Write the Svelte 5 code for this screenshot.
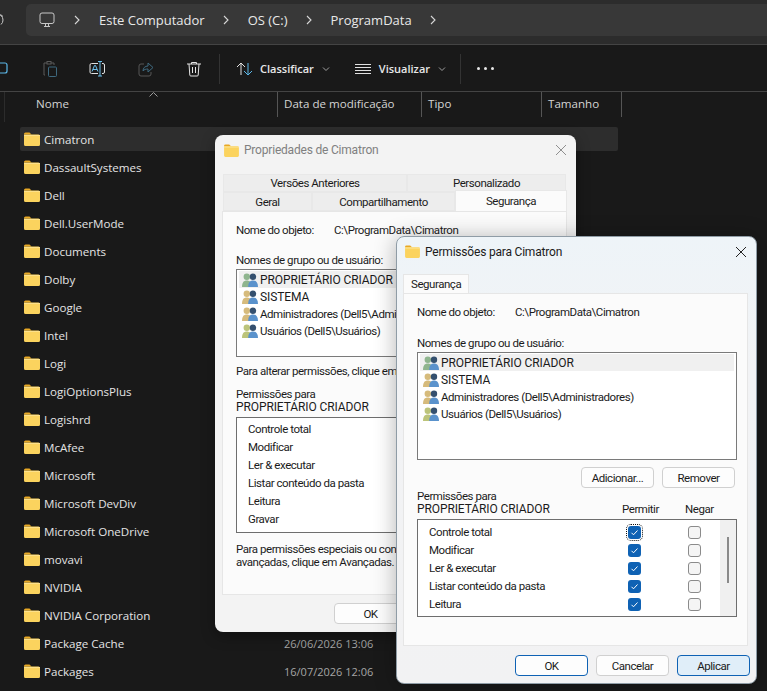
<script>
  const folders = [
    { name: "Cimatron", selected: true },
    { name: "DassaultSystemes" },
    { name: "Dell" },
    { name: "Dell.UserMode" },
    { name: "Documents" },
    { name: "Dolby" },
    { name: "Google" },
    { name: "Intel" },
    { name: "Logi" },
    { name: "LogiOptionsPlus" },
    { name: "Logishrd" },
    { name: "McAfee" },
    { name: "Microsoft" },
    { name: "Microsoft DevDiv" },
    { name: "Microsoft OneDrive" },
    { name: "movavi" },
    { name: "NVIDIA" },
    { name: "NVIDIA Corporation" },
    { name: "Package Cache", date: "26/06/2026 13:06" },
    { name: "Packages", date: "16/07/2026 12:06" },
  ];

  const users = [
    { name: "PROPRIETÁRIO CRIADOR", tone: "#8fb58e", caps: true, selected: true },
    { name: "SISTEMA", tone: "#d6bb7c", caps: true },
    { name: "Administradores (Dell5\\Administradores)", tone: "#d6bb7c" },
    { name: "Usuários (Dell5\\Usuários)", tone: "#bcc47a" },
  ];

  const perms = ["Controle total", "Modificar", "Ler & executar", "Listar conteúdo da pasta", "Leitura", "Gravar"];
</script>

{#snippet folder(cls)}
  <svg class={cls} viewBox="0 0 16 14">
    <path d="M0 2a1.5 1.5 0 0 1 1.5-1.5h4L7.500 2.500H0z" fill="#e8a825" />
    <path d="M0 2.500h14.500A1.500 1.500 0 0 1 16 4v8.500a1.500 1.500 0 0 1-1.500 1.500h-13A1.500 1.500 0 0 1 0 12.500z" fill="#fbd35e" />
    <path d="M0 3h16v1H0z" fill="#fde08a" />
  </svg>
{/snippet}

{#snippet group(tone)}
  <svg class="group" viewBox="0 0 16 14" width="16" height="14">
    <circle cx="4.800" cy="3.800" r="3.200" fill={tone} />
    <path d="M0 14c0-4.500 1.800-6.500 4.800-6.500s5 2 5 6.500z" fill={tone} />
    <circle cx="11" cy="3.800" r="3.200" fill="#34506f" />
    <path d="M6.200 14c0-4.500 1.800-6.500 4.800-6.500s5 2 5 6.500z" fill="#5a92cc" />
  </svg>
{/snippet}

{#snippet chevron()}
  <svg class="crumb-sep" viewBox="0 0 8 10" width="8" height="10">
    <path d="M2 1l4 4-4 4" fill="none" stroke="#d8d8d8" stroke-width="1.100" />
  </svg>
{/snippet}

{#snippet caret()}
  <svg viewBox="0 0 8 6" width="8" height="6">
    <path d="M1 1.500l3 3 3-3" fill="none" stroke="#a0a0a0" stroke-width="1" />
  </svg>
{/snippet}

{#snippet close(color)}
  <svg class="close" viewBox="0 0 12 12" width="12" height="12">
    <path d="M1 1l10 10M11 1L1 11" stroke={color} stroke-width="1" fill="none" />
  </svg>
{/snippet}

{#snippet tick()}
  <svg viewBox="0 0 13 13" width="13" height="13">
    <path d="M3.500 6.800l2 2 4-4.300" fill="none" stroke="#fff" stroke-width="1" />
  </svg>
{/snippet}

<main class="page">
  <header class="addressbar">
    <svg class="refresh" viewBox="0 0 4 14" width="4" height="14">
      <path d="M-3 1a6 6 0 0 1 6 6 6 6 0 0 1-2 4.500M.5 1.500L3 3.500" fill="none" stroke="#c8c8c8" />
    </svg>
    <div class="pill">
      <svg class="pc" viewBox="0 0 16 16" width="16" height="16">
        <rect x="1" y="1" width="14" height="10.500" rx="2" fill="none" stroke="#c8c8c8" />
        <path d="M5 14.500h6M6.500 12v2M9.500 12v2" stroke="#c8c8c8" fill="none" />
      </svg>
      {@render chevron()}
      <span>Este Computador</span>
      {@render chevron()}
      <span>OS (C:)</span>
      {@render chevron()}
      <span>ProgramData</span>
      {@render chevron()}
    </div>
  </header>

  <nav class="toolbar">
    <svg class="tool copy" viewBox="0 0 16 16" width="16" height="16">
      <rect x="-7" y="2" width="14" height="10" rx="2" fill="none" stroke="#5cb8e8" stroke-width="1.200" />
    </svg>
    <svg class="tool paste" viewBox="0 0 16 18" width="16" height="18">
      <path d="M3 15H2V3h3M9 3h3v2" fill="none" stroke="#5a5a5a" />
      <rect x="5" y="1.500" width="4" height="2.500" fill="none" stroke="#5a5a5a" />
      <rect x="6.500" y="7" width="8" height="9.500" rx="1" fill="none" stroke="#3f6a80" />
    </svg>
    <svg class="tool rename" viewBox="0 0 17 16" width="17" height="16">
      <path d="M9 2.500H2.500A1.500 1.500 0 0 0 1 4v7a1.500 1.500 0 0 0 1.500 1.500H9M13 2.500h1A1.500 1.500 0 0 1 15.500 4v7a1.500 1.500 0 0 1-1.500 1.500h-1" fill="none" stroke="#e0e0e0" />
      <path d="M11 .500v14.500M9 .500h4M9 15h4" stroke="#6cc0ec" fill="none" />
      <path d="M3 10.500l2.500-6h1l2.500 6M4 8.500h4" stroke="#6cc0ec" fill="none" />
    </svg>
    <svg class="tool share" viewBox="0 0 16 16" width="16" height="16">
      <path d="M6 3H3a2 2 0 0 0-2 2v8a2 2 0 0 0 2 2h8a2 2 0 0 0 2-2v-2" fill="none" stroke="#565656" />
      <path d="M5 10c0-3 2-5 5-5V2l5 4.500L10 11V8c-2 0-4 .500-5 2z" fill="none" stroke="#3f6a80" />
    </svg>
    <svg class="tool trash" viewBox="0 0 16 16" width="16" height="16">
      <path d="M1 3h14M5.500 3V1.500h5V3M3 3l.8 11a1 1 0 0 0 1 1h6.400a1 1 0 0 0 1-1L13 3M6.500 6v6M9.500 6v6" fill="none" stroke="#e4e4e4" />
    </svg>
    <i class="tool-sep"></i>
    <button class="menu sort">
      <svg viewBox="0 0 17 14" width="17" height="14">
        <path d="M5 13V1M1 5l4-4 4 4" fill="none" stroke="#e0e0e0" />
        <path d="M12 1v12M8 9l4 4 4-4" fill="none" stroke="#5cb8e8" />
      </svg>
      <span class="menu-label">Classificar</span>
      {@render caret()}
    </button>
    <button class="menu view">
      <svg viewBox="0 0 16 10" width="16" height="10">
        <path d="M0 .500h16M0 3.500h16M0 6.500h16M0 9.500h16" stroke="#e0e0e0" fill="none" />
      </svg>
      <span class="menu-label">Visualizar</span>
      {@render caret()}
    </button>
    <i class="tool-sep"></i>
    <span class="dots"><b></b><b></b><b></b></span>
  </nav>

  <div class="columns">
    <span class="col name">Nome</span>
    <svg class="sort-arrow" viewBox="0 0 9 5" width="9" height="5">
      <path d="M.5 4.500l4-4 4 4" fill="none" stroke="#9a9a9a" />
    </svg>
    <span class="col">Data de modificação</span>
    <span class="col">Tipo</span>
    <span class="col">Tamanho</span>
  </div>

  <ul class="files">
    {#each folders as f}
      <li class:selected={f.selected}>
        {@render folder("file-icon")}
        <span class="file-name">{f.name}</span>
        {#if f.date}<span class="file-date">{f.date}</span>{/if}
      </li>
    {/each}
  </ul>

  <section class="dialog back">
    <div class="title">
      {@render folder("title-icon")}
      <span>Propriedades de Cimatron</span>
      {@render close("#8f8f8f")}
    </div>
    <div class="tabs-two">
      <div class="tab-row">
        <span class="tab t-versions">Versões Anteriores</span>
        <span class="tab t-custom">Personalizado</span>
      </div>
      <div class="tab-row lower">
        <span class="tab t-geral">Geral</span>
        <span class="tab t-share">Compartilhamento</span>
        <span class="tab t-sec">Segurança</span>
      </div>
    </div>
    <div class="panel">
      <div class="objname"><span>Nome do objeto:</span><span>C:\ProgramData\Cimatron</span></div>
      <p class="listlabel">Nomes de grupo ou de usuário:</p>
      <div class="userlist">
        {#each users as u}
          <div class="user" class:selected={u.selected}>
            {@render group(u.tone)}<span class:caps={u.caps}>{u.name}</span>
          </div>
        {/each}
      </div>
      <p class="hint">Para alterar permissões, clique em Editar.</p>
      <div class="permhead"><span>Permissões para<br /><span class="caps">PROPRIETÁRIO CRIADOR</span></span></div>
      <div class="permlist">
        {#each perms as p}
          <div class="perm">{p}</div>
        {/each}
        <div class="perm">Permissões especiais</div>
      </div>
      <p class="hint two">Para permissões especiais ou configurações<br />avançadas, clique em Avançadas.</p>
    </div>
    <div class="footer">
      <button class="btn">OK</button>
    </div>
  </section>

  <section class="dialog front">
    <div class="title">
      {@render folder("title-icon")}
      <span>Permissões para Cimatron</span>
      {@render close("#222")}
    </div>
    <div class="single-tab"><span>Segurança</span></div>
    <div class="panel">
      <div class="objname"><span>Nome do objeto:</span><span>C:\ProgramData\Cimatron</span></div>
      <p class="listlabel">Nomes de grupo ou de usuário:</p>
      <div class="userlist">
        {#each users as u}
          <div class="user" class:selected={u.selected}>
            {@render group(u.tone)}<span class:caps={u.caps}>{u.name}</span>
          </div>
        {/each}
      </div>
      <div class="actions">
        <button class="btn">Adicionar...</button>
        <button class="btn">Remover</button>
      </div>
      <div class="permhead grid">
        <span>Permissões para<br /><span class="caps">PROPRIETÁRIO CRIADOR</span></span>
        <span class="allow">Permitir</span>
        <span class="deny">Negar</span>
      </div>
      <div class="permlist">
        <div class="perm-scroll">
          {#each perms as p, i}
            <div class="perm grid">
              <span>{p}</span>
              <span class="check on" class:focus={i === 0}>{@render tick()}</span>
              <span class="check"></span>
            </div>
          {/each}
        </div>
        <div class="scrollbar"><i></i></div>
      </div>
    </div>
    <div class="footer">
      <button class="btn primary">OK</button>
      <button class="btn">Cancelar</button>
      <button class="btn apply">Aplicar</button>
    </div>
  </section>
</main>

<style>
  :global(body) {
    background: #191919;
  }

  .page {
    position: relative;
    width: 767px;
    height: 691px;
    overflow: hidden;
    background: #191919;
    color: #e6e6e6;
    font-family: "Open Sans", "Noto Sans", sans-serif;
    font-size: 12px;
  }

  /* explorer */
  .addressbar {
    display: flex;
    align-items: flex-start;
    height: 45px;
    padding-top: 4px;
    box-sizing: border-box;
    background: #2c2c2c;
    border-bottom: 1px solid #444;
  }

  .refresh {
    flex: none;
    margin: 9px 22px 0 0;
  }

  .pill {
    flex: 1;
    display: flex;
    align-items: center;
    height: 32px;
    padding-left: 13px;
    border-radius: 5px 0 0 5px;
    background: #383838;
    font-size: 13px;
    color: #e8e8e8;
  }

  .pc {
    margin-right: 18px;
  }

  .crumb-sep {
    margin-right: 18px;
  }

  .pill span {
    margin-right: 17px;
  }

  .toolbar {
    display: flex;
    align-items: center;
    height: 47px;
    padding-top: 1px;
    box-sizing: border-box;
    border-bottom: 1px solid #444;
    background: #191919;
  }

  .tool {
    flex: none;
  }

  .copy {
    margin-right: 26px;
  }

  .paste {
    margin-right: 31px;
  }

  .rename {
    margin-right: 32px;
  }

  .share {
    margin-right: 32px;
  }

  .trash {
    margin-right: 17px;
  }

  .tool-sep {
    width: 1px;
    height: 30px;
    background: #333;
    margin-right: 16px;
  }

  .menu {
    display: flex;
    align-items: center;
    padding: 0;
    border: 0;
    background: none;
    color: #e8e8e8;
    font: inherit;
    font-size: 11px;
    font-weight: 600;
  }

  .menu-label {
    margin: 0 8px 0 7px;
  }

  .view .menu-label {
    margin-left: 8px;
  }

  .sort {
    margin-right: 25px;
  }

  .view {
    margin-right: 14px;
  }

  .dots {
    display: flex;
    gap: 4px;
  }

  .dots b {
    width: 3px;
    height: 3px;
    border-radius: 50%;
    background: #e8e8e8;
  }

  .columns {
    position: relative;
    display: grid;
    grid-template-columns: 278px 144px 120px 80px;
    height: 35px;
    font-size: 11.600px;
    color: #d4d4d4;
  }

  .columns::before {
    content: "";
    position: absolute;
    left: 4px;
    top: 0;
    width: 1px;
    height: 30px;
    background: #2c2c2c;
  }

  .col {
    padding: 4px 0 0 6px;
    height: 25px;
    box-sizing: border-box;
    border-right: 1px solid #555;
  }

  .col.name {
    padding-left: 36px;
  }

  .sort-arrow {
    position: absolute;
    left: 149px;
    top: 0;
  }

  .files {
    list-style: none;
    margin: 0;
    padding: 0 149px 0 20px;
  }

  .files li {
    display: flex;
    align-items: center;
    height: 24px;
    margin-bottom: 4px;
    padding-left: 4px;
    border-radius: 2px;
    color: #e4e4e4;
    font-size: 11.600px;
  }

  .files li.selected {
    background: #2d2d2d;
  }

  :global(.file-icon) {
    width: 16px;
    height: 14px;
    flex: none;
  }

  .file-name {
    margin-left: 4px;
    width: 240px;
  }

  .file-date {
    color: #a6a6a6;
    font-size: 11px;
  }

  /* dialogs */
  .dialog {
    position: absolute;
    display: flex;
    flex-direction: column;
    width: 361px;
    box-sizing: border-box;
    border-radius: 8px;
    color: #1b1b1b;
    font-family: Roboto, "Liberation Sans", sans-serif;
    font-size: 11.500px;
    letter-spacing: -0.45px;
    box-shadow: 0 4px 14px rgba(0, 0, 0, 0.35);
  }

  .back {
    left: 215px;
    top: 135px;
    height: 497px;
    background: #f3f3f3;
  }

  .front {
    left: 396px;
    top: 236px;
    height: 448px;
    background: linear-gradient(180deg, #eef4f8, #f2f3f5 30%, #f2f2f3);
    border: 1px solid #8f9ca6;
    box-shadow: 0 2px 22px rgba(0, 0, 0, 0.3);
  }

  .caps {
    font-size: 12px;
    letter-spacing: -0.1px;
  }

  .title {
    display: flex;
    align-items: center;
    height: 30px;
    padding: 0 9px 0 9px;
    font-size: 12px;
    letter-spacing: -0.2px;
  }

  .front .title {
    height: 29px;
    padding-left: 8px;
  }

  .title span {
    flex: 1;
    margin-left: 5px;
  }

  .back .title {
    color: #808080;
  }

  :global(.title-icon) {
    width: 15px;
    height: 13px;
    flex: none;
  }

  .tabs-two {
    padding: 0 9px 0 8px;
    margin-top: 9px;
  }

  .tab-row {
    display: flex;
    height: 18px;
  }

  .tab-row.lower {
    height: 19px;
  }

  .tab {
    display: flex;
    align-items: center;
    justify-content: center;
    box-sizing: border-box;
    border: 1px solid #e8e8e8;
    background: #ededed;
  }

  .t-versions {
    width: 184px;
  }

  .t-custom {
    width: 159px;
  }

  .t-geral {
    width: 89px;
  }

  .t-share {
    width: 143px;
  }

  .t-sec {
    width: 112px;
    height: 21px;
    margin-top: -2px;
    background: #fbfbfb;
    border-bottom: 0;
  }

  .panel {
    box-sizing: border-box;
    background: #fbfbfb;
    overflow: hidden;
    border: 1px solid #e6e6e6;
    padding: 9px 14px 0 13px;
  }

  .back .panel {
    height: 384px;
    margin: 0 9px 0 7px;
  }

  .objname {
    display: flex;
    height: 17px;
    align-items: center;
  }

  .objname span:first-child {
    width: 98px;
  }

  .listlabel {
    margin: 15px 0 2px;
    line-height: 14px;
  }

  .front .listlabel {
    margin-top: 16px;
  }

  .userlist {
    box-sizing: border-box;
    height: 108px;
    width: 320px;
    padding: 1px 2px;
    border: 1px solid #7a7a7a;
    background: #fff;
  }

  .back .userlist {
    height: 88px;
  }

  .user {
    display: flex;
    align-items: center;
    height: 17px;
    padding-left: 3px;
  }

  .user.selected {
    background: #f0f0f0;
  }

  .group {
    margin-right: 2px;
    flex: none;
  }

  .hint {
    margin: 8px 0 10px;
    line-height: 13px;
  }

  .hint.two {
    margin-top: 10px;
    line-height: 12.500px;
  }

  .permhead {
    line-height: 13px;
    height: 26px;
  }

  .permlist {
    display: flex;
    box-sizing: border-box;
    width: 320px;
    height: 98px;
    overflow: hidden;
    border: 1px solid #6e6e6e;
    background: #fff;
  }

  .back .permlist {
    display: block;
    height: 116px;
    margin-top: 3px;
    padding-top: 2px;
  }

  .back .perm {
    height: 18px;
    line-height: 18px;
    padding-left: 11px;
  }

  /* front dialog body */
  .single-tab {
    padding: 8px 0 0 6px;
    height: 19px;
  }

  .single-tab span {
    display: inline-flex;
    align-items: center;
    height: 19px;
    padding: 0 7px;
    box-sizing: border-box;
    background: #fbfbfb;
    border: 1px solid #e6e6e6;
    border-bottom: 0;
  }

  .front .panel {
    height: 353px;
    margin: 0 8px 0 6px;
  }

  .actions {
    display: flex;
    justify-content: flex-end;
    gap: 8px;
    width: 318px;
    margin-top: 7px;
  }

  .btn {
    width: 73px;
    height: 21px;
    padding: 0;
    box-sizing: border-box;
    border: 1px solid #d0d0d0;
    border-radius: 4px;
    background: #fdfdfd;
    color: #1b1b1b;
    font: inherit;
    letter-spacing: inherit;
  }

  .grid {
    display: grid;
    grid-template-columns: 205px 60px 55px;
  }

  .permhead.grid {
    align-items: end;
    margin-top: 2px;
    width: 320px;
  }

  .deny {
    margin-left: 3px;
  }

  .front .permlist {
    margin-top: 3px;
  }

  .perm-scroll {
    flex: 1;
    padding-top: 3px;
  }

  .perm.grid {
    grid-template-columns: 199px 60px 13px;
    align-items: center;
    height: 18px;
    padding-left: 11px;
  }

  .check {
    display: block;
    width: 13px;
    height: 13px;
    box-sizing: border-box;
    border: 1px solid #8b8b8b;
    border-radius: 3px;
    background: #f5f5f5;
  }

  .check svg {
    display: block;
  }

  .check.on {
    background: #0f62b4;
    border: 0;
  }

  .check.focus {
    outline: 1px dotted #111;
    outline-offset: 1px;
  }

  .scrollbar {
    flex: none;
    width: 16px;
    background: #f0f0f0;
    padding: 17px 0 0 7px;
    box-sizing: border-box;
  }

  .scrollbar i {
    display: block;
    width: 2px;
    height: 46px;
    background: #8a8a8a;
  }

  .footer {
    display: flex;
    justify-content: flex-end;
    gap: 8px;
    padding: 9px 6px 0 0;
  }

  .back .footer {
    justify-content: flex-start;
    padding: 8px 0 0 119px;
  }

  .primary {
    border: 1px solid #0f62b4;
  }

  .apply {
    border: 1px solid #0f62b4;
    background: #e0eef9;
  }
</style>
